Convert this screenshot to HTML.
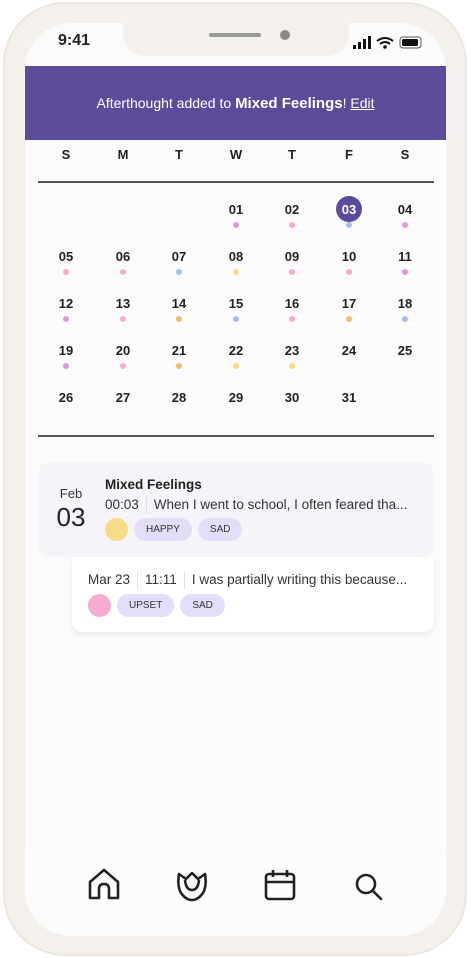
<!DOCTYPE html>
<html><head><style>
*{margin:0;padding:0;box-sizing:border-box}
body{width:471px;height:958px;background:#fff;position:relative;overflow:hidden;font-family:"Liberation Sans",sans-serif;color:#222}
.phone{position:absolute;left:3px;top:2px;width:464px;height:954px;border-radius:62px;background:#f4f0ec;box-shadow:inset 0 0 0 2px #ece6e0}
.screen{position:absolute;left:25px;top:23px;width:421px;height:913px;border-radius:46px;background:#fbfbfb;overflow:hidden}
.a{position:absolute}
.notch{left:98px;top:-2px;width:226px;height:35px;background:#f4f0ec;border-radius:0 0 22px 22px}
.d{position:absolute;width:40px;text-align:center;font-size:13px;font-weight:bold;color:#222}
.dot{position:absolute;width:6px;height:6px;border-radius:3px}
.tag{display:inline-block;height:23px;line-height:23px;padding:0 12px;border-radius:12px;background:#e2defa;font-size:10px;color:#333;margin-right:6px;vertical-align:middle}
.sep{display:inline-block;width:1px;height:17px;background:#ddd;vertical-align:middle;margin:0 7px}
</style></head><body>
<div class="phone"></div>
<div class="screen">
 <div class="a notch"></div>
 <div class="a" style="left:184px;top:10px;width:52px;height:4px;border-radius:2px;background:#999"></div>
 <div class="a" style="left:255px;top:7px;width:10px;height:10px;border-radius:5px;background:#888"></div>
 <div class="a" style="left:33px;top:9px;font-size:16px;font-weight:bold">9:41</div>
 <svg class="a" style="left:328px;top:13px" width="70" height="14" viewBox="0 0 70 14">
  <rect x="0" y="9" width="3" height="4" fill="#111"/><rect x="5" y="6" width="3" height="7" fill="#111"/><rect x="10" y="3" width="3" height="10" fill="#111"/><rect x="15" y="0" width="3" height="13" fill="#111"/>
  <path d="M24 5 Q32 -1 40 5 M27 8 Q32 4 37 8" stroke="#111" stroke-width="2" fill="none"/><circle cx="32" cy="11" r="1.8" fill="#111"/>
  <rect x="47" y="1" width="21" height="11" rx="3" stroke="#555" fill="none"/><rect x="49" y="3" width="16" height="7" rx="1.5" fill="#111"/>
 </svg>
 <div class="a" style="left:0;top:43px;width:421px;height:74px;background:#5c4b99;color:#fff;font-size:14px;text-align:center;line-height:74px;white-space:nowrap">Afterthought added to <b style="font-size:15px">Mixed Feelings</b>! <u>Edit</u></div>
</div>
<div id="cal"></div>
<div class="a" style="left:38px;top:181px;width:396px;height:1.5px;background:#555"></div>
<div class="a" style="left:38px;top:435px;width:396px;height:1.5px;background:#555"></div>
<div class="a" style="left:38px;top:462px;width:396px;height:95px;background:#f6f4f8;border-radius:12px"></div>
<div class="a" style="left:72px;top:557px;width:362px;height:75px;background:#fff;border-radius:0 0 10px 10px;box-shadow:0 3px 6px rgba(0,0,0,.07)"></div>
<div class="a" style="left:50px;top:486px;width:42px;text-align:center;font-size:13px;color:#333">Feb</div>
<div class="a" style="left:46px;top:502px;width:50px;text-align:center;font-size:26px;color:#222">03</div>
<div class="a" style="left:105px;top:477px;font-size:13.5px;font-weight:bold">Mixed Feelings</div>
<div class="a" style="left:105px;top:497px;font-size:13.5px;color:#333;white-space:nowrap">00:03<span class="sep"></span>When I went to school, I often feared tha...</div>
<div class="a" style="left:105px;top:518px;white-space:nowrap"><span style="display:inline-block;width:23px;height:23px;border-radius:12px;background:#f7dc87;vertical-align:middle;margin-right:6px"></span><span class="tag">HAPPY</span><span class="tag">SAD</span></div>
<div class="a" style="left:88px;top:572px;font-size:13.5px;color:#333;white-space:nowrap">Mar 23<span class="sep"></span>11:11<span class="sep"></span>I was partially writing this because...</div>
<div class="a" style="left:88px;top:594px;white-space:nowrap"><span style="display:inline-block;width:23px;height:23px;border-radius:12px;background:#f6abd1;vertical-align:middle;margin-right:6px"></span><span class="tag">UPSET</span><span class="tag">SAD</span></div>
<div class="a" style="left:25px;top:843px;width:421px;height:93px;background:#fcfcfc;border-radius:14px 14px 46px 46px"></div>
<svg class="a" style="left:88px;top:868px" width="33" height="33" viewBox="0 0 33 33" fill="none" stroke="#222" stroke-width="2.6" stroke-linejoin="round"><path d="M2 30 V14 L16 2 L30 14 V30 H21 V21 Q21 16 16 16 Q11 16 11 21 V30 Z"/></svg>
<svg class="a" style="left:176px;top:872px" width="32" height="30" viewBox="0 0 32 30" fill="none" stroke="#222" stroke-width="2.6" stroke-linejoin="round"><path d="M3 2 L10 7 L16 1 L22 7 L29 2 Q31 14 27 21 Q22 28 16 28 Q10 28 5 21 Q1 14 3 2 Z"/><path d="M9 8 Q10 18 16 18 Q22 18 23 8"/></svg>
<svg class="a" style="left:264px;top:869px" width="32" height="32" viewBox="0 0 32 32" fill="none" stroke="#222" stroke-width="2.6" stroke-linejoin="round"><rect x="2" y="5" width="28" height="25" rx="3"/><path d="M2 13 H30 M9 1 V8 M23 1 V8"/></svg>
<svg class="a" style="left:354px;top:872px" width="30" height="30" viewBox="0 0 30 30" fill="none" stroke="#222" stroke-width="2.6" stroke-linecap="round"><circle cx="12" cy="12" r="9"/><path d="M19 19 L27 27"/></svg>
<script>
var cx=[66,123,179,236,292,349,405],h="";
"SMTWTFS".split("").forEach(function(c,i){h+='<div class="d" style="left:'+(cx[i]-20)+'px;top:147px">'+c+'</div>'});
var col={m:"#e09ad8",p:"#f6abd1",b:"#a9b9ec",o:"#f6bb6e",y:"#f7dc7e"};
var dots="mpbmppbyppmmpobpobmpoyy";
for(var n=1;n<=31;n++){var idx=n+2,r=Math.floor(idx/7),c=idx%7,x=cx[c],y=202+r*47;
 var t=(n<10?"0":"")+n;
 if(n==3){h+='<div class="a" style="left:'+(x-13)+'px;top:'+(y-6)+'px;width:26px;height:26px;border-radius:13px;background:#5c4b99"></div><div class="d" style="left:'+(x-20)+'px;top:'+y+'px;color:#fff">'+t+'</div>'}
 else h+='<div class="d" style="left:'+(x-20)+'px;top:'+y+'px">'+t+'</div>';
 var dc=dots[n-1]; if(dc) h+='<div class="dot" style="left:'+(x-3)+'px;top:'+(y+20)+'px;background:'+col[dc]+'"></div>';}
document.getElementById("cal").innerHTML=h;
</script>
</body></html>
